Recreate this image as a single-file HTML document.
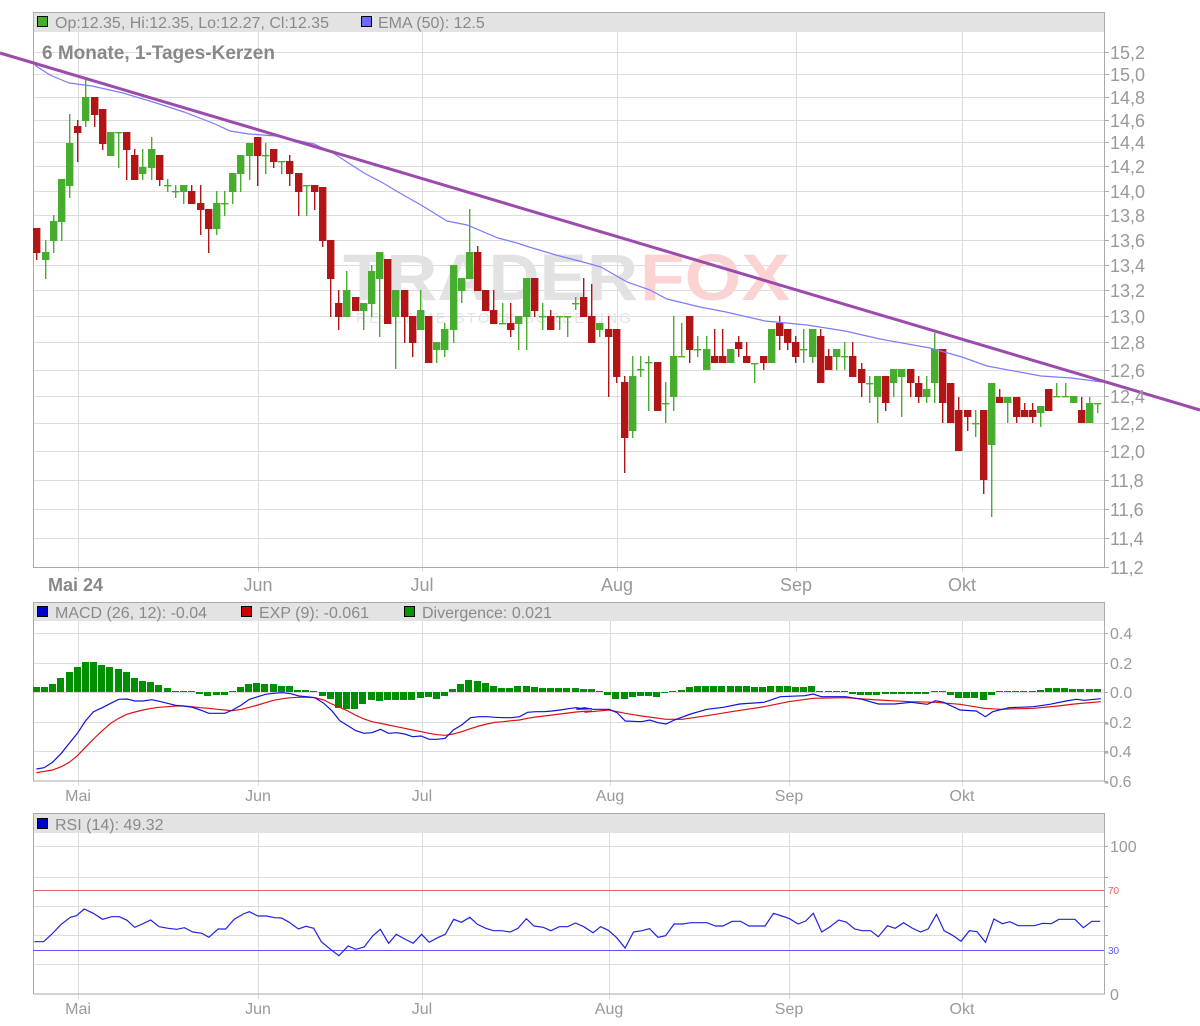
<!DOCTYPE html>
<html><head><meta charset="utf-8"><style>
html,body{margin:0;padding:0;background:#fff;}
svg{display:block;font-family:"Liberation Sans",sans-serif;}
</style></head><body>
<svg id="s" width="1200" height="1026" viewBox="0 0 1200 1026" xmlns="http://www.w3.org/2000/svg">
<rect width="1200" height="1026" fill="#fff"/>
<g id="grid" stroke="#dcdcdc" stroke-width="1"></g>
<!-- watermark -->
<text x="343" y="300" font-size="66" font-weight="bold" fill="#e2e2e2" textLength="295" lengthAdjust="spacingAndGlyphs">TRADER</text>
<text x="640" y="300" font-size="66" font-weight="bold" fill="#fbd3d3" textLength="150" lengthAdjust="spacingAndGlyphs">FOX</text>
<text x="356" y="323" font-size="15" fill="#e4e4e4" textLength="275" lengthAdjust="spacing">REALTIME STOCK SCREENING</text>
<g id="main"></g>
<g id="txt" fill="#999" font-size="18"></g>
</svg>
<script>
var NS="http://www.w3.org/2000/svg";
function el(p,n,a,t){var e=document.createElementNS(NS,n);for(var k in a)e.setAttribute(k,a[k]);if(t!=null)e.textContent=t;document.getElementById(p).appendChild(e);return e;}
var g='grid',m='main',tx='txt';
// ===== main panel =====
var prices=[["15,2",52],["15,0",74],["14,8",97],["14,6",120],["14,4",142],["14,2",166],["14,0",191],["13,8",215],["13,6",240],["13,4",265],["13,2",290],["13,0",316],["12,8",342],["12,6",370],["12,4",396],["12,2",423],["12,0",451],["11,8",480],["11,6",509],["11,4",538],["11,2",567]];
prices.forEach(function(p){el(g,'line',{x1:33,x2:1104,y1:p[1]+.5,y2:p[1]+.5});el(g,'line',{x1:1104,x2:1109,y1:p[1]+.5,y2:p[1]+.5,stroke:'#aaa'});el(tx,'text',{x:1110,y:p[1]+7},p[0]);});
[78,258,422,617,796,962].forEach(function(x){el(g,'line',{x1:x+.5,x2:x+.5,y1:32,y2:572});});
el(g,'rect',{x:33,y:12,width:1071,height:20,fill:'#e3e3e3',stroke:'none'});
el(g,'line',{x1:33,x2:1104,y1:12.5,y2:12.5,stroke:'#aaa'});
el(g,'line',{x1:33.5,x2:33.5,y1:12,y2:567,stroke:'#aaa'});
el(g,'line',{x1:1104.5,x2:1104.5,y1:12,y2:567,stroke:'#aaa'});
el(g,'line',{x1:33,x2:1104,y1:567.5,y2:567.5,stroke:'#aaa'});
el(tx,'text',{x:48,y:591,'font-weight':'bold',fill:'#888'},'Mai 24');
[["Jun",258],["Jul",422],["Aug",617],["Sep",796],["Okt",962]].forEach(function(l){el(tx,'text',{x:l[1],y:591,'text-anchor':'middle'},l[0]);});
el(tx,'rect',{x:37.5,y:16.5,width:10,height:10,fill:'#47ad2f',stroke:'#000'});
el(tx,'text',{x:55,y:28,'font-size':16,fill:'#8a8a8a'},'Op:12.35, Hi:12.35, Lo:12.27, Cl:12.35');
el(tx,'rect',{x:361.5,y:16.5,width:10,height:10,fill:'#6b6bff',stroke:'#000'});
el(tx,'text',{x:378,y:28,'font-size':16,fill:'#8a8a8a'},'EMA (50): 12.5');
el(tx,'text',{x:42,y:59,'font-size':19,'font-weight':'bold',fill:'#888'},'6 Monate, 1-Tages-Kerzen');

// candles: [bodyTop, bodyBot, wickTop, wickBot, color]
var C=[[228,253,228,260,'r'],[252,260,240,279,'g'],[221,241,215,253,'g'],[179,222,179,241,'g'],[143,186,114,198,'g'],[126,133,120,162,'r'],[97,121,80,127,'g'],[97,115,97,127,'r'],[109,144,109,150,'r'],[132,156,132,156,'g'],[132,132,132,168,'g'],[132,150,132,180,'r'],[155,180,149,180,'r'],[167,174,149,180,'g'],[149,168,137,180,'g'],[155,180,155,186,'r'],[185,185,179,192,'g'],[191,191,185,198,'g'],[185,192,185,204,'g'],[191,204,185,204,'r'],[203,210,185,235,'r'],[209,229,209,253,'r'],[203,229,191,235,'g'],[203,203,191,216,'g'],[173,192,173,204,'g'],[155,174,155,192,'g'],[143,156,143,180,'g'],[137,156,137,186,'r'],[155,155,143,174,'g'],[149,162,149,168,'r'],[161,161,161,174,'g'],[161,174,155,186,'r'],[173,192,173,216,'r'],[185,185,185,216,'g'],[185,192,185,210,'r'],
[187,241,187,247,'r'],[240,279,240,317,'r'],[303,317,290,330,'r'],[290,317,271,317,'g'],[297,311,297,311,'r'],[303,311,303,330,'g'],[271,304,265,317,'g'],[252,279,252,337,'g'],[259,324,259,324,'r'],[290,317,290,369,'g'],[290,317,290,343,'r'],[316,343,316,357,'r'],[310,330,290,330,'g'],[316,363,316,363,'r'],[342,350,342,363,'g'],[329,350,323,357,'g'],[265,330,265,343,'g'],[278,291,278,303,'g'],[252,279,209,279,'g'],[252,291,246,291,'r'],[290,311,290,311,'r'],[310,324,290,324,'r'],[323,323,303,323,'g'],[323,330,303,337,'r'],[316,324,316,350,'g'],[278,317,278,350,'g'],[278,311,278,317,'r'],[316,316,303,330,'g'],[316,330,310,330,'r'],[316,316,316,330,'g'],[316,316,316,337,'g'],[303,303,297,310,'g'],[297,317,278,317,'r'],[316,343,284,343,'r'],[323,330,323,337,'g'],[329,337,316,397,'r'],[329,377,329,383,'r'],[382,438,376,473,'r'],[376,431,356,438,'g'],[369,369,356,377,'g'],[362,362,356,411,'g'],[362,411,362,411,'r'],[403,403,382,423,'g'],[356,397,316,411,'g'],[356,356,323,356,'g'],[316,350,316,363,'r'],
[349,349,336,357,'g'],[349,370,336,370,'g'],[356,363,329,363,'r'],[356,363,329,363,'r'],[349,363,349,363,'g'],[342,349,336,357,'r'],[356,363,342,363,'r'],[363,363,363,383,'g'],[356,363,356,370,'r'],[329,363,329,363,'g'],[323,336,316,350,'r'],[329,343,329,350,'r'],[342,357,336,363,'r'],[349,349,329,363,'g'],[329,357,329,363,'g'],[336,383,329,383,'r'],[356,370,349,370,'r'],[349,357,349,370,'g'],[356,356,342,370,'g'],[356,377,342,377,'r'],[369,383,363,397,'r'],[383,383,376,403,'g'],[376,397,376,423,'g'],[376,403,376,411,'r'],[369,383,369,397,'g'],[369,377,369,417,'g'],[369,383,369,397,'r'],[383,397,376,403,'r'],[389,397,376,403,'g'],[349,383,333,403,'g'],[349,403,349,423,'r'],[383,423,383,423,'r'],[410,451,397,451,'r'],[410,417,410,431,'r'],[423,423,410,437,'g'],[410,480,410,494,'r'],[383,445,383,517,'g'],[397,403,389,403,'r'],[397,403,397,423,'g'],[397,417,397,423,'r'],[410,417,403,417,'r'],[410,417,403,423,'r'],[406,413,406,427,'g'],[389,411,389,411,'r'],[396,396,383,396,'g'],[396,396,383,396,'g'],[396,403,396,403,'g'],[410,423,397,423,'r'],[403,423,397,423,'g'],[403,403,403,413,'g']];
C.forEach(function(c,i){var x=Math.round(36.4+8.16*i);var col=c[4]=='g'?'#47ad2f':'#b21515';
el(m,'rect',{x:x,y:c[2],width:1.4,height:Math.max(1,c[3]-c[2]),fill:col});
if(c[1]-c[0]<2)el(m,'rect',{x:x-3,y:c[0],width:7.4,height:1.4,fill:col});
else el(m,'rect',{x:x-3,y:c[0],width:7.4,height:c[1]-c[0],fill:col});});
// EMA
var ema=[[33,62],[36,66],[50,75],[69,83],[92,86],[123,93],[153,102],[184,112],[215,124],[230,131],[249,134],[276,136],[314,144],[333,153],[364,173],[383,183],[398,192],[421,205],[447,221],[467,225],[498,238],[517,243],[529,247],[556,255],[583,262],[601,267],[627,282],[650,290],[667,299],[700,307],[726,312],[765,321],[807,325],[845,331],[880,339],[930,348],[962,357],[987,366],[1041,376],[1071,378],[1102,382]];
el(m,'polyline',{points:ema.join(' '),fill:'none',stroke:'#7b7bff','stroke-width':1.2});
el(m,'line',{x1:0,y1:53,x2:1200,y2:410,stroke:'#9c4aab','stroke-width':3});

// ===== MACD panel =====
[[633,"0.4"],[663,"0.2"],[692,"0.0"],[722,"-0.2"],[751,"-0.4"],[781,"-0.6"]].forEach(function(p){if(p[0]<781)el(g,'line',{x1:33,x2:1104,y1:p[0]+.5,y2:p[0]+.5});el(g,'line',{x1:1104,x2:1108,y1:p[0]+.5,y2:p[0]+.5,stroke:'#aaa'});el(tx,'text',{x:p[1][0]=='-'?1104:1110,y:p[0]+6,'font-size':16},p[1]);});
[78,258,422,610,789,962].forEach(function(x){el(g,'line',{x1:x+.5,x2:x+.5,y1:621,y2:786});});
el(g,'rect',{x:33,y:602,width:1071,height:19,fill:'#e3e3e3',stroke:'none'});
el(g,'rect',{x:33.5,y:602.5,width:1071,height:178.5,fill:'none',stroke:'#aaa'});
[["Mai",78],["Jun",258],["Jul",422],["Aug",610],["Sep",789],["Okt",962]].forEach(function(l){el(tx,'text',{x:l[1],y:801,'text-anchor':'middle','font-size':16},l[0]);});
el(tx,'rect',{x:37.5,y:606.5,width:10,height:10,fill:'#0000cc',stroke:'#000'});
el(tx,'text',{x:55,y:618,'font-size':16,fill:'#8a8a8a'},'MACD (26, 12): -0.04');
el(tx,'rect',{x:241.5,y:606.5,width:10,height:10,fill:'#cc0000',stroke:'#000'});
el(tx,'text',{x:259,y:618,'font-size':16,fill:'#8a8a8a'},'EXP (9): -0.061');
el(tx,'rect',{x:404.5,y:606.5,width:10,height:10,fill:'#009900',stroke:'#000'});
el(tx,'text',{x:422,y:618,'font-size':16,fill:'#8a8a8a'},'Divergence: 0.021');
var D=[5,5,8,14,20,25,30,30,27,25,23,20,14,11,10,7,4,1,1,1,-2,-4,-3,-3,1,5,8,9,8,8,6,6,2,2,0,-4,-7,-16,-17,-17,-12,-8,-9,-8,-8,-8,-8,-6,-5,-7,-4,3,8,12,11,9,6,4,4,6,6,5,4,4,
4,4,4,3,3,1,-3,-7,-7,-5,-4,-4,-5,-1,1,2,5,6,6,6,6,6,6,6,5,5,6,6,6,5,5,6,1,1,1,1,-2,-3,-3,-3,-2,-2,-2,-2,-2,-2,1,0,-3,-6,-6,-6,-8,-3,1,1,1,1,1,2,4,4,4,3,3,3,3];
D.forEach(function(d,i){var x=Math.round(33+8.16*i);if(x>1098)return;var h=Math.max(1,Math.abs(d));el(m,'rect',{x:x,y:d>=0?692-h:692,width:7,height:h,fill:'#008f00'});});
function conv(a,ox,fx,oy){return a.map(function(p){return (ox+p[0]/fx).toFixed(1)+','+(oy+p[1]/3).toFixed(1);}).join(' ');}
var bl=[[95,537],[115,533],[137,517],[160,490],[181,460],[202,430],[223,393],[244,365],[267,353],[289,340],[310,328],[331,327],[352,333],[373,333],[396,329],[416,334],[437,340],[458,346],[479,348],[502,352],[523,360],[545,370],[566,370],[587,370],[607,360],[630,345],[651,328],[673,320],[693,313],[714,310],[738,308],[759,311],[780,318],[801,320],[822,323],[845,340],[866,362],[887,392],[908,407],[929,422],[950,430],[971,428],[993,418],[1014,430],[1035,428],[1056,432],[1077,440],[1099,438],[1120,448],[1141,448],[1162,445],[1183,420],[1205,405],[1228,383],[1250,380],[1271,380],[1292,382],[1314,383],[1335,383],[1356,380],[1377,367],[1398,365],[1420,365],[1441,363],[1462,360],[1483,356],[1504,353],[1525,357],[1545,356]];
var rl=[[95,548],[137,540],[160,530],[181,517],[202,497],[223,472],[244,447],[267,422],[289,400],[310,385],[331,373],[352,366],[373,360],[396,355],[416,352],[437,350],[458,348],[479,348],[502,350],[523,353],[545,355],[566,358],[587,360],[607,362],[630,358],[651,352],[673,345],[693,338],[714,331],[738,326],[759,323],[780,322],[801,322],[822,323],[845,330],[866,342],[887,352],[908,363],[929,376],[950,387],[971,395],[993,400],[1014,405],[1035,410],[1056,415],[1077,420],[1099,425],[1120,430],[1141,434],[1162,436],[1183,432],[1205,425],[1228,416],[1250,408],[1271,402],[1292,397],[1314,395],[1335,392],[1356,390],[1377,385],[1398,381],[1420,378],[1441,375],[1462,372],[1483,369],[1504,366],[1525,364],[1545,363]];
var br=[[40,328],[60,323],[80,328],[120,328],[140,338],[160,363],[200,365],[220,360],[240,368],[260,372],[280,360],[320,342],[360,328],[400,322],[440,312],[500,307],[540,290],[600,287],[620,282],[640,290],[700,290],[740,298],[780,312],[820,312],[860,307],[900,313],[920,302],[940,307],[980,330],[1020,333],[1042,350],[1060,335],[1100,323],[1160,320],[1200,313],[1240,303],[1265,298],[1285,301],[1325,296]];
var rr=[[60,337],[120,330],[160,340],[200,348],[260,358],[300,358],[360,347],[420,335],[500,320],[560,305],[620,295],[700,293],[780,300],[860,305],[920,307],[980,313],[1040,325],[1080,328],[1160,325],[1220,318],[1260,312],[1325,305]];
el(m,'polyline',{points:conv(rl,0,2.61,590)+' '+conv(rr,560,2.45,600),fill:'none',stroke:'#dd1111','stroke-width':1.2});
el(m,'polyline',{points:conv(bl,0,2.61,590)+' '+conv(br,560,2.45,600),fill:'none',stroke:'#1111dd','stroke-width':1.2});

// ===== RSI panel =====
[846,877,906,935,964].forEach(function(y){el(g,'line',{x1:33,x2:1104,y1:y+.5,y2:y+.5});el(g,'line',{x1:1104,x2:1108,y1:y+.5,y2:y+.5,stroke:'#aaa'});});
[78,258,422,609,789,962].forEach(function(x){el(g,'line',{x1:x+.5,x2:x+.5,y1:833,y2:999});});
el(g,'rect',{x:33,y:813,width:1071,height:20,fill:'#e3e3e3',stroke:'none'});
el(g,'rect',{x:33.5,y:813.5,width:1071,height:180.5,fill:'none',stroke:'#aaa'});
el(m,'line',{x1:33,x2:1104,y1:890.5,y2:890.5,stroke:'#f06060','stroke-width':1});
el(m,'line',{x1:33,x2:1104,y1:950.5,y2:950.5,stroke:'#5a5aff','stroke-width':1});
el(tx,'text',{x:1110,y:852,'font-size':16},'100');
el(tx,'text',{x:1110,y:1000,'font-size':16},'0');
el(tx,'text',{x:1108,y:894,'font-size':10,fill:'#f06060'},'70');
el(tx,'text',{x:1108,y:954,'font-size':10,fill:'#5a5aff'},'30');
[["Mai",78],["Jun",258],["Jul",422],["Aug",609],["Sep",789],["Okt",962]].forEach(function(l){el(tx,'text',{x:l[1],y:1014,'text-anchor':'middle','font-size':16},l[0]);});
el(tx,'rect',{x:37.5,y:818.5,width:10,height:10,fill:'#0000cc',stroke:'#000'});
el(tx,'text',{x:55,y:830,'font-size':16,fill:'#8a8a8a'},'RSI (14): 49.32');
var R=[[45,395],[57,395],[68,372],[80,343],[92,322],[100,317],[110,297],[122,310],[134,328],[146,320],[156,320],[166,331],[176,352],[186,342],[197,330],[208,350],[220,355],[231,358],[241,353],[252,366],[264,370],[273,382],[285,357],[295,357],[306,328],[318,312],[326,305],[337,318],[348,318],[359,323],[368,324],[378,337],[390,357],[400,349],[410,355],[420,395],[432,418],[443,437],[455,408],[465,418],[476,411],[487,378],[497,358],[508,400],[518,373],[529,387],[540,400],[551,373],[561,397],[572,383],[582,373],[593,328],[603,337],[614,322],[624,343],[635,355],[645,362],[656,362],[667,366],[677,355],[688,326],[698,348],[710,352],[720,362],[731,350],[742,350],[752,339],[763,350],[775,368],[785,350],[795,361],[806,383],[817,414],[828,366],[839,362],[849,356],[860,382],[870,377],[881,342],[892,342],[903,338],[914,338],[924,338],[935,348],[945,348],[957,334],[968,334],[979,348],[990,348],[1000,348],[1011,310],[1022,318],[1032,326],[1043,342],[1053,333],[1063,310],[1074,366],[1085,350],[1096,330],[1106,336],[1117,357],[1127,362],[1138,362],[1148,380],[1160,347],[1170,355],[1181,338],[1192,354],[1203,366],[1213,357],[1224,313],[1234,362],[1245,376],[1256,394],[1267,362],[1277,365],[1288,397],[1299,327],[1310,341],[1320,335],[1331,347],[1342,347],[1352,347],[1363,340],[1374,341],[1384,328],[1395,328],[1405,328],[1416,353],[1427,334],[1438,334]];
el(m,'polyline',{points:R.map(function(p){return (p[0]/1.307).toFixed(1)+','+(810+p[1]/3).toFixed(1);}).join(' '),fill:'none',stroke:'#2222dd','stroke-width':1.2});
</script>
</body></html>
